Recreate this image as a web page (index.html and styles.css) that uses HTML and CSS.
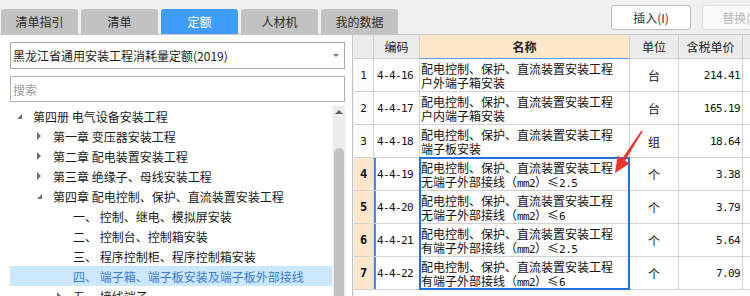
FILE: index.html
```html
<!DOCTYPE html>
<html>
  <head>
    <meta charset="utf-8">
    <title>定额</title>
    <link rel="stylesheet" href="styles.css">
  </head>
  <body>

    <div class="topbar">
      <div class="tabs">
        <div class="tab">清单指引</div>
        <div class="tab">清单</div>
        <div class="tab active">定额</div>
        <div class="tab">人材机</div>
        <div class="tab">我的数据</div>
      </div>
      <div class="actions">
        <button class="btn">插入(I)</button>
        <button class="btn disabled">替换(R)</button>
      </div>
    </div>

    <div class="main">
      <div class="left">
        <div class="select">黑龙江省通用安装工程消耗量定额(2019)<span class="caret"></span></div>
        <input class="search" placeholder="搜索">
        <div class="tree-box">
          <ul class="tree">
            <li class="l0"><span class="tog open"></span>第四册 电气设备安装工程</li>
            <li class="l1"><span class="tog closed"></span>第一章 变压器安装工程</li>
            <li class="l1"><span class="tog closed"></span>第二章 配电装置安装工程</li>
            <li class="l1"><span class="tog closed"></span>第三章 绝缘子、母线安装工程</li>
            <li class="l1"><span class="tog open"></span>第四章 配电控制、保护、直流装置安装工程</li>
            <li class="l2"><span class="tog"></span>一、 控制、继电、模拟屏安装</li>
            <li class="l2"><span class="tog"></span>二、 控制台、控制箱安装</li>
            <li class="l2"><span class="tog"></span>三、 程序控制柜、程序控制箱安装</li>
            <li class="l2 selected"><span class="tog"></span>四、 端子箱、端子板安装及端子板外部接线</li>
            <li class="l2"><span class="tog closed"></span>五、 接线端子</li>
          </ul>
          <div class="scrollbar">
            <div class="up"></div>
            <div class="thumb"></div>
          </div>
        </div>
      </div>

      <div class="grid-wrap">
        <div class="grid">
          <div class="hd"></div>
          <div class="hd">编码</div>
          <div class="hd name-hd">名称</div>
          <div class="hd">单位</div>
          <div class="hd">含税单价</div>
          <div class="hd"></div>

          <div class="num">1</div>
          <div class="code">4-4-16</div>
          <div class="name">配电控制、保护、直流装置安装工程<br>户外端子箱安装</div>
          <div class="unit">台</div>
          <div class="price">214.41</div>
          <div class="extra"></div>

          <div class="num">2</div>
          <div class="code">4-4-17</div>
          <div class="name">配电控制、保护、直流装置安装工程<br>户内端子箱安装</div>
          <div class="unit">台</div>
          <div class="price">165.19</div>
          <div class="extra"></div>

          <div class="num">3</div>
          <div class="code">4-4-18</div>
          <div class="name">配电控制、保护、直流装置安装工程<br>端子板安装</div>
          <div class="unit">组</div>
          <div class="price">18.64</div>
          <div class="extra"></div>

          <div class="num on">4</div>
          <div class="code on">4-4-19</div>
          <div class="name">配电控制、保护、直流装置安装工程<br>无端子外部接线（<span class="en">mm2</span>）≤<span class="en">2.5</span></div>
          <div class="unit">个</div>
          <div class="price">3.38</div>
          <div class="extra"></div>

          <div class="num on">5</div>
          <div class="code on">4-4-20</div>
          <div class="name">配电控制、保护、直流装置安装工程<br>无端子外部接线（<span class="en">mm2</span>）≤<span class="en">6</span></div>
          <div class="unit">个</div>
          <div class="price">3.79</div>
          <div class="extra"></div>

          <div class="num on">6</div>
          <div class="code on">4-4-21</div>
          <div class="name">配电控制、保护、直流装置安装工程<br>有端子外部接线（<span class="en">mm2</span>）≤<span class="en">2.5</span></div>
          <div class="unit">个</div>
          <div class="price">5.64</div>
          <div class="extra"></div>

          <div class="num on">7</div>
          <div class="code on">4-4-22</div>
          <div class="name">配电控制、保护、直流装置安装工程<br>有端子外部接线（<span class="en">mm2</span>）≤<span class="en">6</span></div>
          <div class="unit">个</div>
          <div class="price">7.09</div>
          <div class="extra"></div>
        </div>
        <div class="sel-frame"></div>
      </div>
    </div>

    <svg class="arrow" width="750" height="296" viewBox="0 0 750 296">
      <polygon points="641.4,130.6 642.6,131.4 625.2,160.6 629.6,163.4 615,173 617.6,155.8 622.2,158.6" fill="#e8392e"/>
    </svg>

  </body>
</html>
```

FILE: styles.css
```css
html, body {
  margin: 0;
  overflow: hidden;
}
body {
  width: 750px;
  height: 296px;
  background-color: #f0f0f0;
  font-family: "Noto Sans CJK SC", sans-serif;
  font-size: 12px;
  color: #1a1a1a;
}

/* top tabs + buttons */
.topbar {
  height: 34px;
  display: flex;
  border-bottom: 1px solid #c6c6c6;
  overflow: hidden;
}
.tabs {
  display: flex;
  gap: 3px;
  margin-left: 1px;
  align-self: flex-end;
}
.tab {
  width: 77px;
  height: 25px;
  line-height: 25px;
  text-align: center;
  background-color: #c2c2c2;
  color: #2a2a2a;
  border-radius: 3px 3px 0 0;
}
.tab.active {
  background-color: #409dfd;
  color: white;
}
.actions {
  display: flex;
  gap: 11px;
  margin-left: 213px;
  margin-top: 5px;
  flex-shrink: 0;
}
.btn {
  width: 80px;
  height: 25px;
  padding: 0;
  border: 1px solid #b9b9b9;
  border-radius: 3px;
  background-color: white;
  font-family: "Noto Sans CJK SC", sans-serif;
  font-size: 12px;
  color: #333;
}
.btn.disabled {
  border-color: #dedede;
  background-color: #f9f9f9;
  color: #b8b8b8;
}

.main {
  display: flex;
  height: 261px;
}

/* left tree panel */
.left {
  width: 353px;
  flex-shrink: 0;
  box-sizing: border-box;
  background-color: white;
  border-right: 1px solid #c4c4c4;
  padding: 7px 7px 0 10px;
  display: flex;
  flex-direction: column;
}
.select {
  height: 27px;
  box-sizing: border-box;
  border: 1px solid #a8a8a8;
  padding-left: 2px;
  display: flex;
  align-items: center;
}
.caret {
  margin-left: auto;
  margin-right: 5px;
  border-top: 3px solid #7a7a7a;
  border-left: 3px solid transparent;
  border-right: 3px solid transparent;
}
.search {
  height: 26px;
  box-sizing: border-box;
  margin-top: 7px;
  border: 1px solid #b0b0b0;
  padding: 0 0 0 2px;
  font-family: "Noto Sans CJK SC", sans-serif;
  font-size: 12px;
  outline: none;
}
.search::placeholder {
  color: #9c9c9c;
}
.tree-box {
  flex: 1;
  display: flex;
  margin-top: 4px;
  overflow: hidden;
}
.tree {
  flex: 1;
  list-style: none;
  margin: 0;
  padding: 0;
}
.tree li {
  height: 20px;
  display: flex;
  align-items: center;
  white-space: nowrap;
  color: #1a1a1a;
}
.tree .l1 {
  padding-left: 20px;
}
.tree .l2 {
  padding-left: 40px;
}
.tree li.selected {
  background-color: #cce8ff;
  color: #3b7bd6;
}
.tog {
  width: 23px;
  height: 20px;
  flex-shrink: 0;
  display: flex;
  align-items: center;
}
.tog.closed::before {
  content: "";
  margin-left: 7px;
  border-left: 4px solid #6e6e6e;
  border-top: 4px solid transparent;
  border-bottom: 4px solid transparent;
}
.tog.open::before {
  content: "";
  margin-left: 7px;
  margin-top: 1px;
  border-bottom: 5px solid #6e6e6e;
  border-left: 5px solid transparent;
}
.scrollbar {
  width: 12px;
  background-color: #ececec;
  border-left: 1px solid #f6f6f6;
  display: flex;
  flex-direction: column;
  align-items: center;
}
.up {
  margin-top: 4px;
  border-bottom: 4px solid #606060;
  border-left: 4px solid transparent;
  border-right: 4px solid transparent;
}
.thumb {
  width: 10px;
  flex: 1;
  margin-top: 34px;
  background-color: #c2c2c2;
  border-radius: 5px 5px 0 0;
}

/* right grid */
.grid-wrap {
  flex: 1;
  margin-left: 1px;
  background-color: white;
  overflow: hidden;
  position: relative;
}
.grid {
  display: grid;
  grid-template-columns: 20px 46px 210px 49px 64px 40px;
  grid-template-rows: 24px repeat(7, 33px);
  width: max-content;
}
.grid > div {
  box-sizing: border-box;
  border-right: 1px solid #d2d2d2;
  border-bottom: 1px solid #d2d2d2;
  display: flex;
  align-items: center;
  white-space: nowrap;
  color: #111;
}
.grid .hd {
  background-color: #ebebeb;
  justify-content: center;
  color: #222;
}
.grid .name-hd {
  background-color: #fde6c9;
  font-weight: bold;
  border-bottom-color: #5a9ff0;
}
.grid .num {
  justify-content: center;
  background-color: #fbfbfb;
  font-family: "DejaVu Sans Mono", monospace;
  font-size: 11px;
}
.grid .num.on {
  background-color: #fde6c9;
  font-weight: bold;
  font-size: 12px;
}
.grid .code {
  padding-left: 3px;
  font-family: "DejaVu Sans Mono", monospace;
  font-size: 11px;
  letter-spacing: -0.6px;
}
.grid .code.on {
  box-shadow: inset 2px 0 0 #3d8fef;
}
.grid .name {
  display: block;
  padding: 3px 0 0 1px;
  line-height: 13.5px;
}
.en {
  font-family: "DejaVu Sans Mono", monospace;
  font-size: 11px;
  letter-spacing: -0.6px;
}
.grid .unit {
  justify-content: center;
}
.grid .price {
  justify-content: flex-end;
  padding-right: 2px;
  font-family: "DejaVu Sans Mono", monospace;
  font-size: 11px;
  letter-spacing: -0.6px;
}

/* selection box over the name cells */
.sel-frame {
  position: absolute;
  left: 65px;
  top: 122px;
  width: 211px;
  height: 133px;
  box-sizing: border-box;
  border: 2px solid #1f6fe5;
  pointer-events: none;
}

.arrow {
  position: absolute;
  left: 0;
  top: 0;
  pointer-events: none;
}
```
